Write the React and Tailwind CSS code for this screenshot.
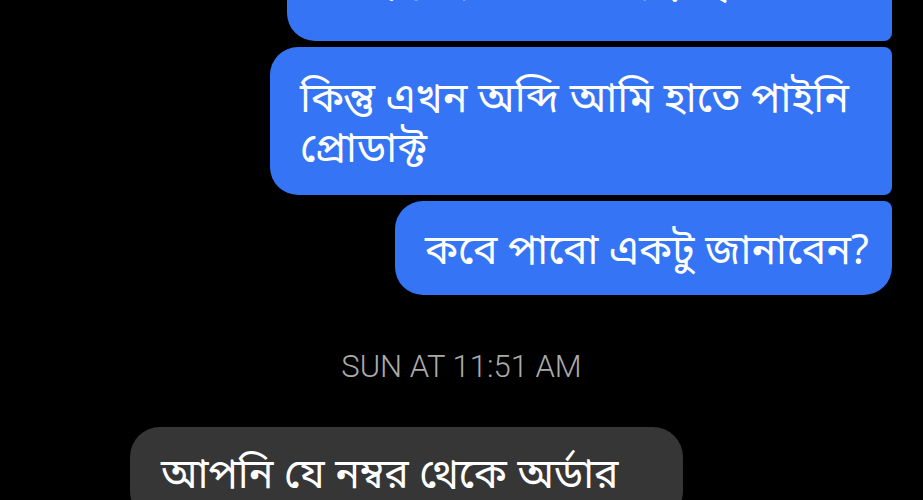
const bn = { fontFamily: '"Noto Sans", "Noto Sans Bengali", sans-serif' };

const Bubble = ({ className, children }) => (
  <div
    className={`text-[41px] leading-[50px] text-white whitespace-nowrap ${className}`}
    style={bn}
  >
    {children}
  </div>
);

export default function App() {
  return (
    <div className="h-[500px] w-full overflow-hidden bg-black">
      <div className="flex flex-col items-end gap-[6px] pr-[31px]">
        {/* first bubble scrolled mostly out of view */}
        <Bubble className="-mt-[63px] w-[605px] rounded-l-[28px] rounded-r-[8px] bg-[#3575f5] pt-[22px] pb-[32px] pl-[33px]">
          আপনাদের অর্ডার দিয়েছি
        </Bubble>
        <Bubble className="w-[622px] rounded-l-[28px] rounded-r-[8px] bg-[#3575f5] py-[24px] pl-[30px]">
          <div>কিন্তু এখন অব্দি আমি হাতে পাইনি</div>
          <div>প্রোডাক্ট</div>
        </Bubble>
        <Bubble className="w-[497px] rounded-[28px] rounded-tr-[8px] bg-[#3575f5] py-[22px] pl-[30px]">
          কবে পাবো একটু জানাবেন?
        </Bubble>
      </div>

      <div
        className="mt-[55px] text-center text-[31px] font-light leading-[34px] text-[#ababab]"
        style={{ fontFamily: "Roboto, sans-serif" }}
      >
        SUN AT 11:51 AM
      </div>

      <div className="mt-[43px] pl-[130px]">
        <Bubble className="w-[553px] rounded-[30px] bg-[#363636] pt-[20px] pb-[24px] pl-[31px]">
          আপনি যে নম্বর থেকে অর্ডার
        </Bubble>
      </div>
    </div>
  );
}
